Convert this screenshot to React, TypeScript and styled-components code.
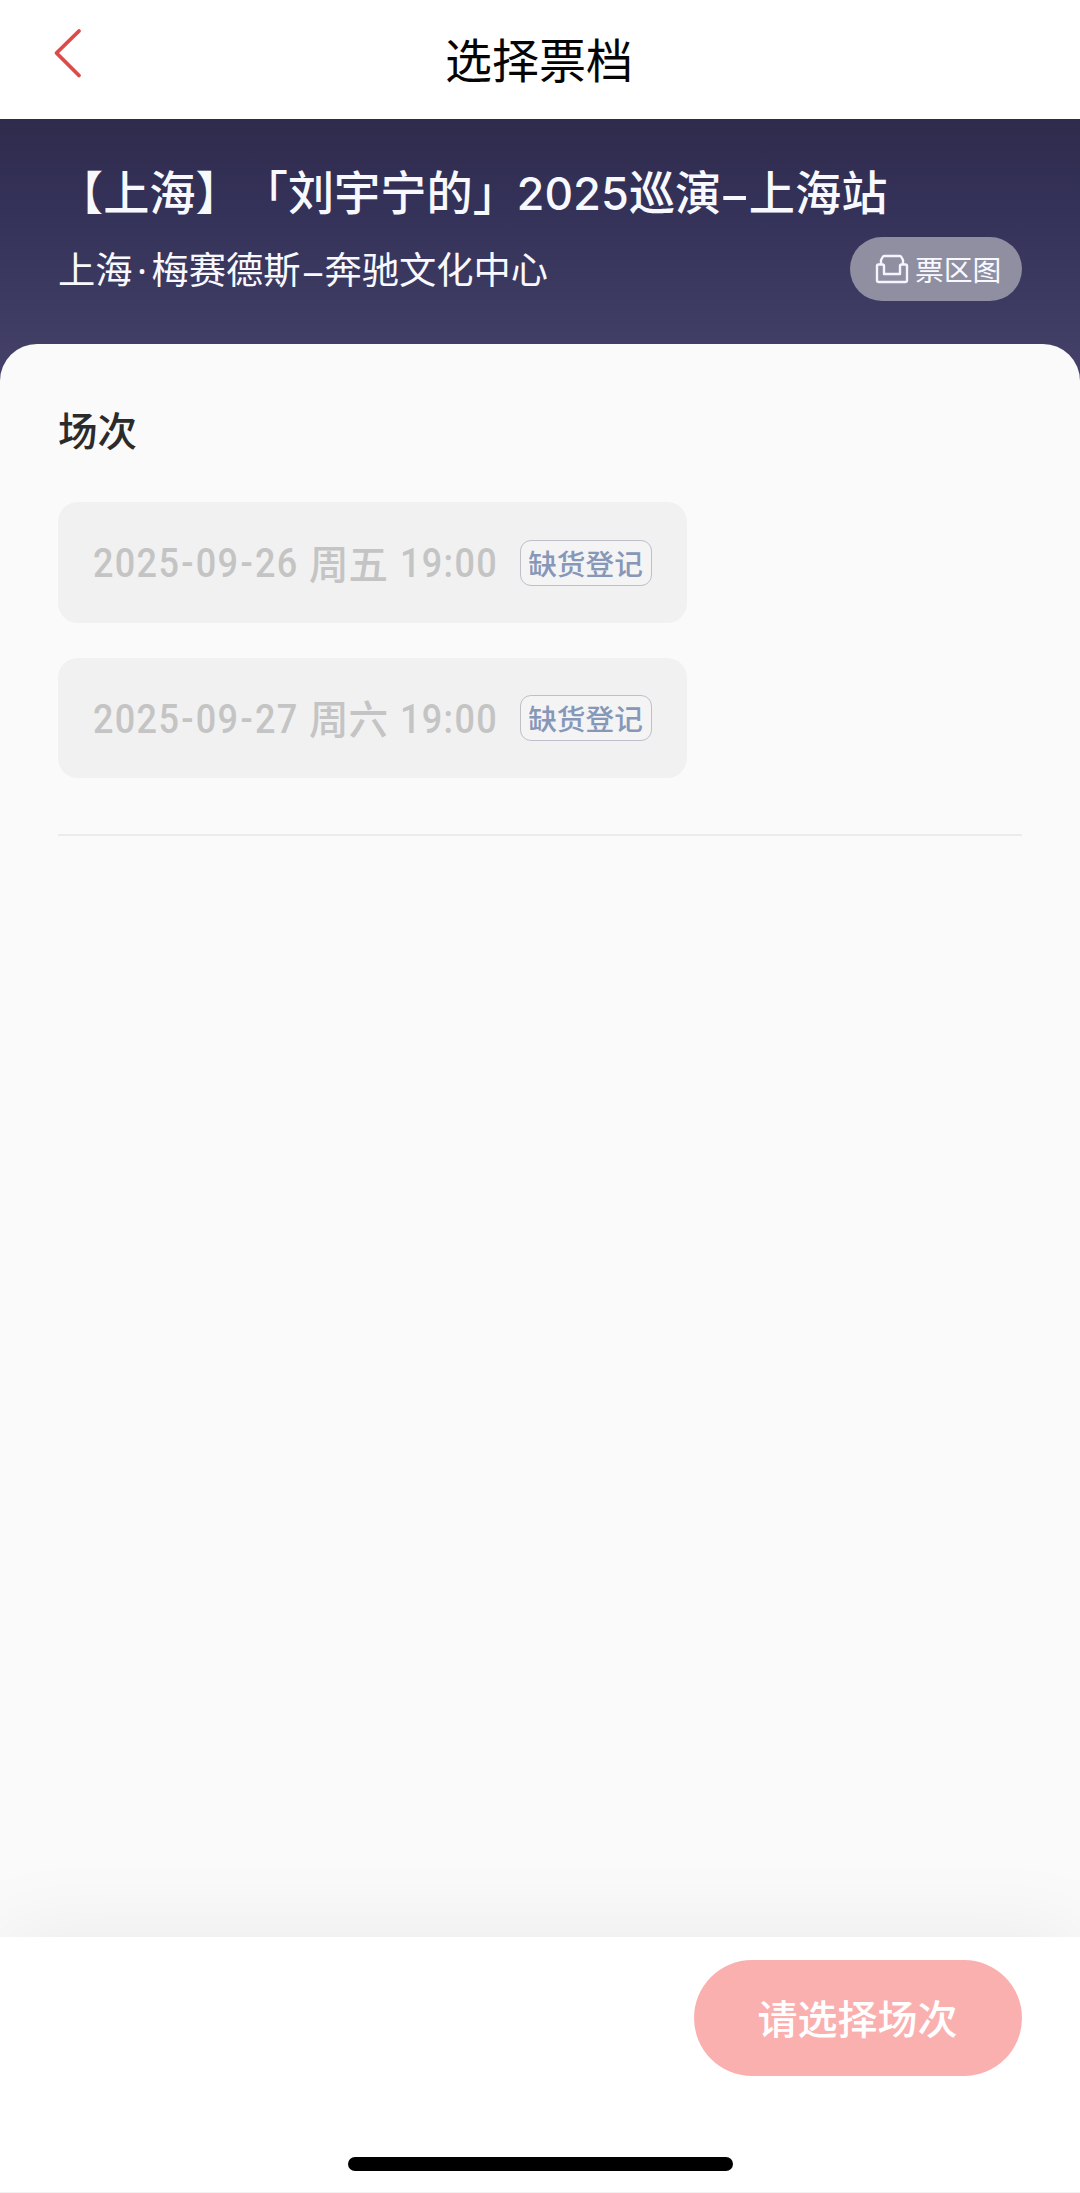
import React from 'react';
import styled, { createGlobalStyle } from 'styled-components';

const GlobalStyle = createGlobalStyle`
  * { box-sizing: border-box; }
  body { margin: 0; background: #fafafa; }
  h1, h2, p { margin: 0; font-weight: 400; }
  button { border: 0; padding: 0; background: none; font: inherit; color: inherit; }
`;

const Page = styled.div`
  width: 1080px;
  height: 2193px;
  display: flex;
  flex-direction: column;
  overflow: hidden;
  background: #fafafa;
  font-family: 'Noto Sans CJK SC', 'Noto Sans', sans-serif;
  text-spacing-trim: space-all;
  white-space: nowrap;
`;

const NavBar = styled.header`
  height: 119px;
  flex: none;
  display: grid;
  grid-template-columns: 200px 1fr 202px;
  background: #fff;
`;

const BackButton = styled.button`
  display: flex;
  align-items: flex-start;
  padding: 26px 0 0 50px;
`;

const NavTitle = styled.h1`
  padding-top: 23px;
  text-align: center;
  font-size: 47px;
  line-height: 70px;
  color: #050505;
`;

const Hero = styled.section`
  height: 262px;
  flex: none;
  padding: 37px 58px 0;
  background: linear-gradient(180deg, #2f2b4c 0%, #35325a 35%, #403d64 80%, #45416a 100%);
  color: #f8f9ff;
`;

const EventTitle = styled.h2`
  height: 68px;
  margin-left: -1px;
  font-size: 46.2px;
  line-height: 68px;
  font-weight: 500;
`;

const Year = styled.span`
  margin-left: -3px;
  font-family: Inter, sans-serif;
  font-size: 45px;
  line-height: 1;
  letter-spacing: -0.9px;
  font-feature-settings: 'tnum';
`;

const Mark = styled.span<{ $width: number; $stretch?: number }>`
  display: inline-block;
  width: ${(p) => p.$width}px;
  font-family: 'Noto Sans', sans-serif;
  line-height: 1;
  text-align: center;
  transform: scaleX(${(p) => p.$stretch ?? 1});
`;

const VenueRow = styled.div`
  display: flex;
  align-items: center;
  justify-content: space-between;
  margin-top: 13px;
  height: 64px;
`;

const Venue = styled.p`
  padding-bottom: 2px;
  font-size: 37.25px;
  line-height: 56px;
`;

const MapButton = styled.button`
  width: 172px;
  height: 64px;
  display: flex;
  align-items: center;
  padding-left: 25px;
  gap: 6px;
  border-radius: 32px;
  background: #8f8fa1;
  font-size: 28.8px;
  line-height: 40px;
`;

const Panel = styled.main`
  flex: 1;
  min-height: 0;
  margin-top: -37px;
  padding: 55px 58px 0;
  border-radius: 37px 37px 0 0;
  background: #fafafa;
`;

const SectionTitle = styled.h2`
  font-size: 39.5px;
  line-height: 60px;
  font-weight: 500;
  color: #2b2b2b;
`;

const SessionList = styled.div`
  display: flex;
  flex-direction: column;
  gap: 35px;
  margin-top: 43px;
  padding-bottom: 56px;
  border-bottom: 2px solid #ebebeb;
`;

const SessionCard = styled.button`
  width: 629px;
  height: 120.5px;
  display: flex;
  align-items: center;
  justify-content: space-between;
  padding: 0 35.5px 0 35px;
  border-radius: 20px;
  background: #f1f1f1;
`;

const SessionTime = styled.span`
  display: flex;
  align-items: center;
  font-size: 39.5px;
  font-weight: 500;
  line-height: 60px;
  color: #c4c4c4;
`;

const Digits = styled.span<{ $width: number }>`
  width: ${(p) => p.$width}px;
  padding-top: 4px;
  font-family: Roboto, sans-serif;
  font-size: 40px;
  letter-spacing: 1.5px;
  text-align: left;
  transform: scaleX(0.9);
  transform-origin: left center;
`;

const Hyphen = styled.span`
  margin: 0 1.1px;
`;

const Weekday = styled.span`
  margin: 0 11.5px 0 9px;
  padding-bottom: 1px;
`;

const Tag = styled.span`
  width: 132px;
  height: 46px;
  display: flex;
  align-items: center;
  justify-content: center;
  margin-top: 1px;
  border: 1.5px solid #bdbfca;
  border-radius: 11px;
  background: #f4f4f5;
  font-size: 28.7px;
  line-height: 40px;
  font-weight: 500;
  color: #8797b8;
`;

const Footer = styled.footer`
  height: 256px;
  flex: none;
  display: flex;
  flex-direction: column;
  align-items: flex-end;
  justify-content: space-between;
  padding: 23px 58px 21px;
  border-bottom: 1px solid #f1f1f1;
  background: #fff;
  box-shadow: 0 0 90px rgba(0, 0, 0, 0.07);
`;

const SubmitButton = styled.button`
  width: 328px;
  height: 116px;
  padding: 0 1px 2px 0;
  border-radius: 58px;
  background: #fbb0b0;
  color: #fff;
  font-size: 40px;
  line-height: 114px;
  font-weight: 500;
`;

const HomeIndicator = styled.div`
  width: 385px;
  height: 14px;
  align-self: center;
  border-radius: 7px;
  background: #000;
`;

const BackIcon = () => (
  <svg width="34" height="54" viewBox="0 0 34 54" fill="none">
    <path d="M29 5L6.500 27L29 49.500" stroke="#de4a48" strokeWidth="3.8" strokeLinecap="round" strokeLinejoin="round" />
  </svg>
);

const SeatIcon = () => (
  <svg width="34" height="30" viewBox="0 0 34 30" fill="none" stroke="#f4f6ff" strokeWidth="2.4" strokeLinecap="round" strokeLinejoin="round">
    <path d="M6 10V6L8 2.500Q8.500 2 9.500 2H24.500Q25.500 2 26 2.500L28 6V10" />
    <path d="M9 20V12a1.500 1.500 0 0 0-1.500-1.500H3.500a1.500 1.500 0 0 0-1.500 1.500V26.500a1.500 1.500 0 0 0 1.500 1.500h27a1.500 1.500 0 0 0 1.500-1.500V12a1.500 1.500 0 0 0-1.500-1.500h-4a1.500 1.500 0 0 0-1.500 1.500V20z" />
  </svg>
);

const sessions = [
  { date: ['2025', '09', '26'], day: '周五', time: '19:00', tag: '缺货登记' },
  { date: ['2025', '09', '27'], day: '周六', time: '19:00', tag: '缺货登记' },
];

export default function App() {
  return (
    <>
      <GlobalStyle />
      <Page>
        <NavBar>
          <BackButton aria-label="返回">
            <BackIcon />
          </BackButton>
          <NavTitle>选择票档</NavTitle>
        </NavBar>
        <Hero>
          <EventTitle>
            【上海】「刘宇宁的」<Year>2025</Year>巡演<Mark $width={27.5} $stretch={1.16}>–</Mark>上海站
          </EventTitle>
          <VenueRow>
            <Venue>
              上海<Mark $width={19}>·</Mark>梅赛德斯<Mark $width={24} $stretch={1.16}>–</Mark>奔驰文化中心
            </Venue>
            <MapButton>
              <SeatIcon />
              票区图
            </MapButton>
          </VenueRow>
        </Hero>
        <Panel>
          <SectionTitle>场次</SectionTitle>
          <SessionList>
            {sessions.map(({ date: [year, month, date], day, time, tag }) => (
              <SessionCard key={date}>
                <SessionTime>
                  <Digits $width={207}>
                    {year}<Hyphen>-</Hyphen>{month}<Hyphen>-</Hyphen>{date}
                  </Digits>
                  <Weekday>{day}</Weekday>
                  <Digits $width={97}>{time}</Digits>
                </SessionTime>
                <Tag>{tag}</Tag>
              </SessionCard>
            ))}
          </SessionList>
        </Panel>
        <Footer>
          <SubmitButton>请选择场次</SubmitButton>
          <HomeIndicator />
        </Footer>
      </Page>
    </>
  );
}
